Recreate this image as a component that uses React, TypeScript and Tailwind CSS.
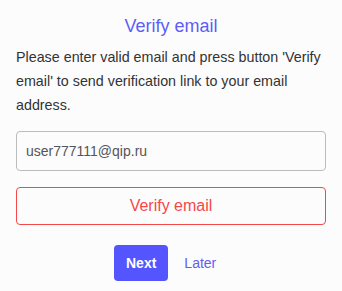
export default function App() {
  return (
    <div className="min-h-screen w-full bg-[#fcfcfd] px-4 pt-[14px] font-['Liberation_Sans',Arial,sans-serif]">
      <h1 className="text-center text-[18px] leading-6 text-[#5e5ef5]">Verify email</h1>
      <p className="mt-[7px] text-[14.3px] leading-6 text-[#333]">
        Please enter valid email and press button 'Verify email' to send verification link to your email address.
      </p>
      <input
        type="email"
        defaultValue="user777111@qip.ru"
        className="mt-[14px] block h-10 w-full rounded-[4px] border border-[#bcbcbc] bg-[#fcfcfd] px-[9px] text-[14px] text-[#555] outline-none"
      />
      <button className="mt-4 block h-[38px] w-full rounded-[4px] border border-[#f54848] bg-transparent text-[16px] text-[#f54848]">
        Verify email
      </button>
      <div className="mt-5 flex items-center gap-4 pl-[98px]">
        <button className="h-9 rounded-[4px] bg-[#5555ff] px-3 text-[14px] font-semibold text-white">Next</button>
        <button className="text-[14px] text-[#5e5ef5]">Later</button>
      </div>
    </div>
  )
}
